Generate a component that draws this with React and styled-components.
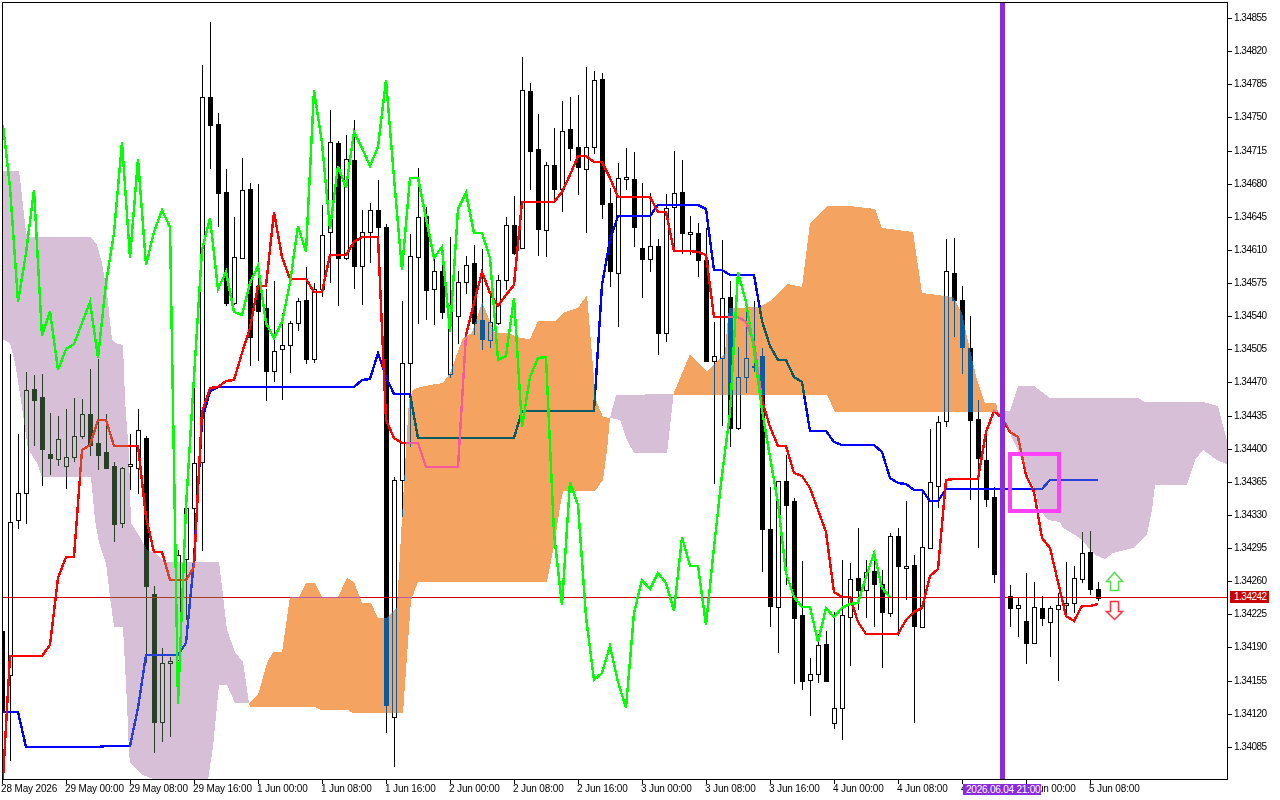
import React from 'react';
import styled, { createGlobalStyle } from 'styled-components';

const GlobalStyle = createGlobalStyle`
  html, body {
    margin: 0;
    background: #fff;
  }
`;

const Page = styled.div`
  position: relative;
  display: grid;
  grid-template-columns: 1226px 1fr;
  grid-template-rows: 778px 1fr;
  width: 1280px;
  height: 800px;
  box-sizing: border-box;
  padding: 2px 0 0 2px;
  overflow: hidden;
  font-family: "Liberation Sans", Arial, sans-serif;
  font-size: 10px;
  color: #000;
  background: #fff;
`;

const ChartFrame = styled.div`
  border: 1px solid #000;
  overflow: hidden;
  line-height: 0;
`;

const PriceAxis = styled.div`
  display: flex;
  flex-direction: column;
  padding-top: 11px;
`;

const PriceTick = styled.div`
  display: flex;
  align-items: flex-start;
  gap: 2px;
  height: 33.14px;
  flex: none;
  letter-spacing: -0.5px;
  line-height: 10px;

  &::before {
    content: '';
    flex: none;
    width: 4px;
    height: 1px;
    margin-top: 5px;
    background: #000;
  }
`;

const TimeAxis = styled.div`
  grid-column: 1 / 3;
  display: flex;
`;

const TimeTick = styled.div`
  flex: none;
  width: 64px;
  white-space: nowrap;
  letter-spacing: -0.15px;
  line-height: 10px;

  &::before {
    content: '';
    display: block;
    width: 1px;
    height: 4px;
    background: #000;
  }
`;

const TimeText = styled.span`
  display: block;
  margin: 0 0 0 -1px;
`;

const PriceBadge = styled.div`
  position: absolute;
  left: 1230px;
  top: 591px;
  width: 39px;
  height: 12px;
  padding-left: 4px;
  box-sizing: border-box;
  background: #c80000;
  color: #fff;
  letter-spacing: -0.5px;
  line-height: 12px;
`;

const TimeBadge = styled.div`
  position: absolute;
  left: 963px;
  top: 784px;
  width: 78px;
  height: 11px;
  padding-left: 3px;
  box-sizing: border-box;
  background: #8a2be2;
  color: #fff;
  letter-spacing: -0.22px;
  line-height: 11px;
  white-space: nowrap;
`;

const Cloud = styled.polygon`
  fill: ${(p) => (p.$kind === 'bull' ? '#0b5b9f' : '#274027')};
  mix-blend-mode: difference;
  shape-rendering: crispEdges;
`;

const Line = styled.polyline`
  fill: none;
  stroke: ${(p) => p.$color};
  stroke-width: 2.4;
  stroke-linejoin: miter;
  shape-rendering: crispEdges;
`;

const Wick = styled.rect`
  fill: #000;
  shape-rendering: crispEdges;
`;

const Body = styled.rect`
  fill: ${(p) => (p.$up ? '#fff' : '#000')};
  stroke: #000;
  stroke-width: 1;
  shape-rendering: crispEdges;
`;

const PriceLine = styled.rect`
  fill: #cc0000;
  shape-rendering: crispEdges;
`;

const MarkerLine = styled.rect`
  fill: #8a2be2;
  shape-rendering: crispEdges;
`;

const Zone = styled.rect`
  fill: none;
  stroke: #ff40f6;
  stroke-width: 4;
  shape-rendering: crispEdges;
`;

const Arrow = styled.polygon`
  fill: #fff;
  stroke: ${(p) => p.$color};
  stroke-width: 1.5;
`;

// high, body top, body bottom, low, up  (pixels, one row per hour, 8px apart)
const candles = [
  [600, 631, 710, 780, 0], [354, 522, 675, 761, 1], [434, 493, 520, 529, 1], [372, 390, 493, 524, 1],
  [375, 389, 400, 446, 0], [374, 397, 449, 486, 0], [413, 454, 458, 475, 0], [416, 439, 459, 466, 1],
  [409, 457, 466, 489, 1], [398, 436, 457, 462, 1], [399, 414, 436, 439, 1], [369, 414, 445, 456, 0],
  [359, 443, 455, 470, 0], [414, 452, 468, 469, 0], [462, 466, 524, 542, 0], [467, 468, 523, 528, 1],
  [434, 464, 466, 490, 1], [409, 430, 468, 494, 1], [436, 438, 586, 663, 0], [586, 594, 722, 753, 0],
  [648, 663, 722, 742, 1], [657, 661, 663, 737, 1], [550, 555, 660, 661, 1], [500, 508, 559, 620, 1],
  [383, 463, 508, 537, 1], [65, 97, 462, 551, 1], [22, 97, 125, 169, 0], [113, 124, 193, 227, 0],
  [169, 192, 303, 306, 0], [217, 257, 303, 305, 1], [158, 190, 258, 258, 1], [183, 189, 337, 366, 0],
  [184, 286, 311, 361, 0], [289, 308, 371, 401, 0], [281, 351, 371, 382, 1], [313, 345, 349, 400, 1],
  [321, 323, 345, 373, 1], [298, 301, 323, 331, 1], [267, 300, 359, 364, 0], [283, 289, 359, 363, 1],
  [205, 235, 289, 297, 1], [110, 142, 232, 283, 1], [141, 143, 258, 306, 0], [135, 159, 258, 260, 1],
  [120, 160, 266, 289, 0], [210, 232, 266, 305, 1], [203, 210, 232, 263, 1], [180, 210, 227, 237, 0],
  [224, 227, 705, 733, 0], [477, 480, 717, 767, 1], [301, 363, 480, 517, 1], [234, 256, 363, 447, 1],
  [168, 217, 257, 324, 1], [207, 216, 290, 320, 0], [255, 271, 289, 325, 1], [257, 271, 312, 319, 0],
  [237, 305, 374, 378, 1], [271, 282, 316, 344, 1], [256, 265, 282, 294, 1], [245, 263, 323, 335, 0],
  [249, 320, 339, 350, 0], [294, 322, 340, 348, 1], [275, 280, 323, 325, 1], [217, 225, 280, 290, 1],
  [196, 225, 253, 255, 0], [57, 90, 248, 248, 1], [83, 91, 151, 190, 0], [114, 149, 229, 256, 0],
  [162, 165, 230, 257, 1], [128, 165, 189, 200, 0], [101, 131, 189, 212, 1], [97, 129, 148, 161, 0],
  [95, 147, 167, 195, 0], [67, 147, 169, 233, 1], [71, 80, 147, 154, 1], [73, 79, 204, 219, 0],
  [188, 203, 271, 287, 0], [163, 178, 273, 327, 1], [148, 177, 179, 190, 1], [152, 179, 227, 247, 0],
  [183, 248, 259, 298, 0], [193, 246, 259, 272, 1], [239, 246, 333, 355, 0], [194, 208, 333, 342, 1],
  [151, 193, 207, 250, 1], [160, 192, 233, 254, 0], [216, 232, 234, 255, 1], [223, 233, 260, 277, 0],
  [228, 260, 361, 361, 0], [322, 356, 361, 484, 1], [240, 298, 358, 426, 1], [281, 297, 428, 447, 0],
  [347, 377, 428, 430, 1], [307, 358, 377, 393, 1], [301, 366, 367, 372, 1], [348, 356, 529, 572, 0],
  [487, 529, 606, 627, 0], [481, 481, 607, 653, 1], [455, 481, 505, 585, 0], [498, 501, 618, 684, 0],
  [561, 615, 681, 690, 0], [658, 674, 680, 716, 1], [634, 645, 674, 683, 1], [631, 644, 681, 681, 0],
  [612, 708, 723, 729, 1], [560, 615, 708, 740, 1], [563, 579, 617, 666, 1], [528, 578, 590, 610, 0],
  [560, 572, 590, 618, 1], [558, 571, 584, 627, 0], [570, 584, 612, 668, 0], [533, 536, 613, 617, 1],
  [528, 536, 566, 636, 0], [501, 566, 568, 600, 1], [555, 565, 626, 723, 0], [490, 547, 627, 627, 1],
  [429, 482, 548, 549, 1], [416, 422, 486, 508, 1], [239, 271, 421, 427, 1], [238, 273, 300, 337, 0],
  [286, 300, 347, 374, 0], [316, 348, 420, 500, 0], [400, 419, 458, 548, 0], [432, 460, 499, 507, 0],
  [487, 497, 574, 583, 0], [574, 580, 596, 600, 0], [585, 596, 608, 627, 0], [597, 605, 608, 637, 1],
  [573, 621, 643, 664, 0], [582, 607, 643, 643, 1], [596, 608, 618, 626, 0], [606, 608, 622, 657, 1],
  [593, 605, 609, 681, 1], [562, 603, 605, 618, 1], [566, 578, 603, 613, 1], [532, 553, 579, 583, 1],
  [531, 552, 589, 595, 0], [582, 589, 598, 601, 0],
];

const chikou = '3,125 10,187 18,302 26,253 34,190 42,336 50,311 58,370 66,349 74,344 82,323 90,302 98,358 106,283 114,233 122,142 130,258 138,159 146,265 154,232 162,210 170,227 178,704 186,507 194,377 202,250 210,218 218,289 226,272 234,312 242,315 250,283 258,266 266,323 274,338 282,322 290,283 298,226 306,252 314,90 322,143 330,229 338,166 346,188 354,132 362,148 370,166 378,147 386,80 394,178 402,270 410,178 418,178 426,218 434,258 442,247 450,332 458,209 466,193 474,233 482,233 490,258 498,360 506,356 514,298 522,427 530,377 538,358 546,357 554,533 562,605 570,482 578,505 586,617 594,680 602,673 610,646 618,682 626,708 634,613 642,580 650,589 658,573 666,583 674,611 682,537 690,566 698,566 706,625 714,547 722,475 730,413 738,272 746,302 754,350 762,410 770,457 778,503 786,573 794,597 802,607 810,607 818,642 826,608 834,617 842,608 850,604 858,603 866,577 874,553 882,588 890,597';

const tenkan = '3,779 10,656 42,656 50,645 58,578 66,557 74,557 82,450 90,445 98,420 106,420 114,446 138,446 146,517 154,552 162,552 170,580 186,580 194,567 202,412 210,388 218,387 226,381 234,380 242,353 250,328 258,286 266,286 274,212 282,257 290,279 306,279 314,292 322,292 330,255 346,255 354,242 362,237 378,237 386,420 394,438 402,443 418,443 426,467 458,467 466,335 474,303 482,272 490,293 498,306 506,295 514,285 522,202 554,202 562,192 570,175 578,156 586,156 594,162 602,162 610,178 618,197 650,197 658,212 666,212 674,251 690,251 698,252 706,255 714,317 738,317 746,322 754,343 762,400 770,427 778,446 786,446 794,473 802,476 810,488 818,510 826,532 834,592 842,597 850,597 858,622 866,634 898,634 906,620 914,612 922,608 930,576 938,569 946,480 954,479 978,479 986,432 994,411 1002,418 1010,432 1018,437 1026,475 1034,492 1042,538 1050,548 1058,582 1066,616 1074,621 1082,606 1090,606 1098,604';

const kijun = '3,712 18,712 26,747 98,747 106,746 130,746 138,708 146,655 178,655 186,643 194,560 202,420 210,391 218,387 354,387 362,380 370,379 378,353 386,377 394,394 410,394 418,438 514,438 522,411 594,411 602,285 610,240 618,216 650,216 658,205 698,205 706,209 714,270 722,270 730,275 754,275 762,321 770,346 778,360 786,360 794,377 802,382 810,431 826,431 834,442 842,445 874,445 882,452 890,478 898,483 906,484 914,490 922,490 930,501 938,501 946,489 1042,489 1050,480 1098,480';

const clouds = [
  {
    kind: 'bear',
    points: '2,171 19,171 21,187 26,233 28,237 91,237 97,245 102,263 107,293 112,340 115,343 123,345 125,400 129,455 131,523 140,537 147,550 155,553 163,560 167,562 219,562 222,587 227,630 235,652 243,662 249,703 235,703 227,685 219,685 213,747 208,780 156,780 143,775 130,763 129,753 127,703 123,627 114,627 110,597 106,563 99,543 95,520 91,477 42,477 37,463 28,449 21,400 15,363 10,343 2,339',
  },
  {
    kind: 'bull',
    points: '249,703 258,695 267,663 273,652 282,652 290,597 299,597 306,583 315,583 322,597 338,597 347,578 354,582 362,603 371,603 378,618 387,618 397,607 403,500 409,400 413,390 420,387 430,385 443,383 450,373 463,338 467,336 472,333 482,302 495,333 508,333 520,338 530,339 538,321 555,321 565,312 578,308 587,295 593,367 596,400 603,417 610,418 607,450 603,480 595,491 563,491 560,507 555,540 547,582 418,582 411,600 407,656 403,713 353,713 348,710 321,710 315,707 250,707',
  },
  {
    kind: 'bear',
    points: '610,418 616,395 673,394 673,400 667,453 634,453 627,440 620,420',
  },
  {
    kind: 'bull',
    points: '673,395 690,354 707,372 725,353 727,328 729,308 760,307 770,301 787,284 802,287 810,223 827,206 850,206 875,209 882,228 913,232 922,293 953,297 962,313 967,337 977,380 985,403 996,403 998,412 835,412 827,395',
  },
  {
    kind: 'bear',
    points: '998,412 1010,411 1018,386 1034,386 1050,398 1138,398 1145,402 1203,402 1218,406 1228,445 1228,465 1217,460 1203,450 1195,460 1187,485 1155,485 1152,510 1147,535 1133,548 1113,553 1105,559 1095,555 1080,538 1063,528 1060,522 1048,520 1040,510 1035,490 1023,463 1017,448 1005,423',
  },
];

const prices = [
  '1.34855', '1.34820', '1.34785', '1.34750', '1.34715', '1.34680', '1.34645', '1.34610',
  '1.34575', '1.34540', '1.34505', '1.34470', '1.34435', '1.34400', '1.34365', '1.34330',
  '1.34295', '1.34260', '1.34225', '1.34190', '1.34155', '1.34120', '1.34085',
];

const times = [
  '28 May 2026', '29 May 00:00', '29 May 08:00', '29 May 16:00', '1 Jun 00:00', '1 Jun 08:00',
  '1 Jun 16:00', '2 Jun 00:00', '2 Jun 08:00', '2 Jun 16:00', '3 Jun 00:00', '3 Jun 08:00',
  '3 Jun 16:00', '4 Jun 00:00', '4 Jun 08:00', '4 Jun 16:00', '5 Jun 00:00', '5 Jun 08:00',
];

function Candle({ index, high, top, bottom, low, up }) {
  const x = 2 + index * 8;
  return (
    <g>
      <Wick x={x} y={high} width="1" height={low - high} />
      <Body $up={up} x={x - 1.5} y={top + 0.5} width="4" height={bottom - top} />
    </g>
  );
}

function Chart() {
  return (
    <svg width="1224" height="776" viewBox="3 3 1224 776">
      <rect x="3" y="3" width="1224" height="776" fill="#fff" />
      {candles.map(([high, top, bottom, low, up], i) => (
        <Candle key={i} index={i} high={high} top={top} bottom={bottom} low={low} up={up === 1} />
      ))}
      <Line $color="#0000ff" points={kijun} />
      <Line $color="#ff0000" points={tenkan} />
      <PriceLine x="3" y="597" width="1224" height="1" />
      {clouds.map((c, i) => (
        <Cloud key={i} $kind={c.kind} points={c.points} />
      ))}
      <Line $color="#00ff00" points={chikou} />
      <MarkerLine x="1000" y="3" width="5" height="776" />
      <Zone x="1010" y="454" width="49" height="57" />
      <Arrow $color="#4fe04f" points="1114.5,572.5 1122.5,581.5 1118.5,581.5 1118.5,590.5 1110.5,590.5 1110.5,581.5 1106.5,581.5" />
      <Arrow $color="#ff3040" points="1114.5,619.5 1122.5,611.5 1118.5,611.5 1118.5,601.5 1110.5,601.5 1110.5,611.5 1106.5,611.5" />
    </svg>
  );
}

export default function App() {
  return (
    <>
      <GlobalStyle />
      <Page>
        <ChartFrame>
          <Chart />
        </ChartFrame>
        <PriceAxis>
          {prices.map((p) => (
            <PriceTick key={p}>{p}</PriceTick>
          ))}
        </PriceAxis>
        <TimeAxis>
          {times.map((t) => (
            <TimeTick key={t}>
              <TimeText>{t}</TimeText>
            </TimeTick>
          ))}
        </TimeAxis>
        <PriceBadge>1.34242</PriceBadge>
        <TimeBadge>2026.06.04 21:00</TimeBadge>
      </Page>
    </>
  );
}
